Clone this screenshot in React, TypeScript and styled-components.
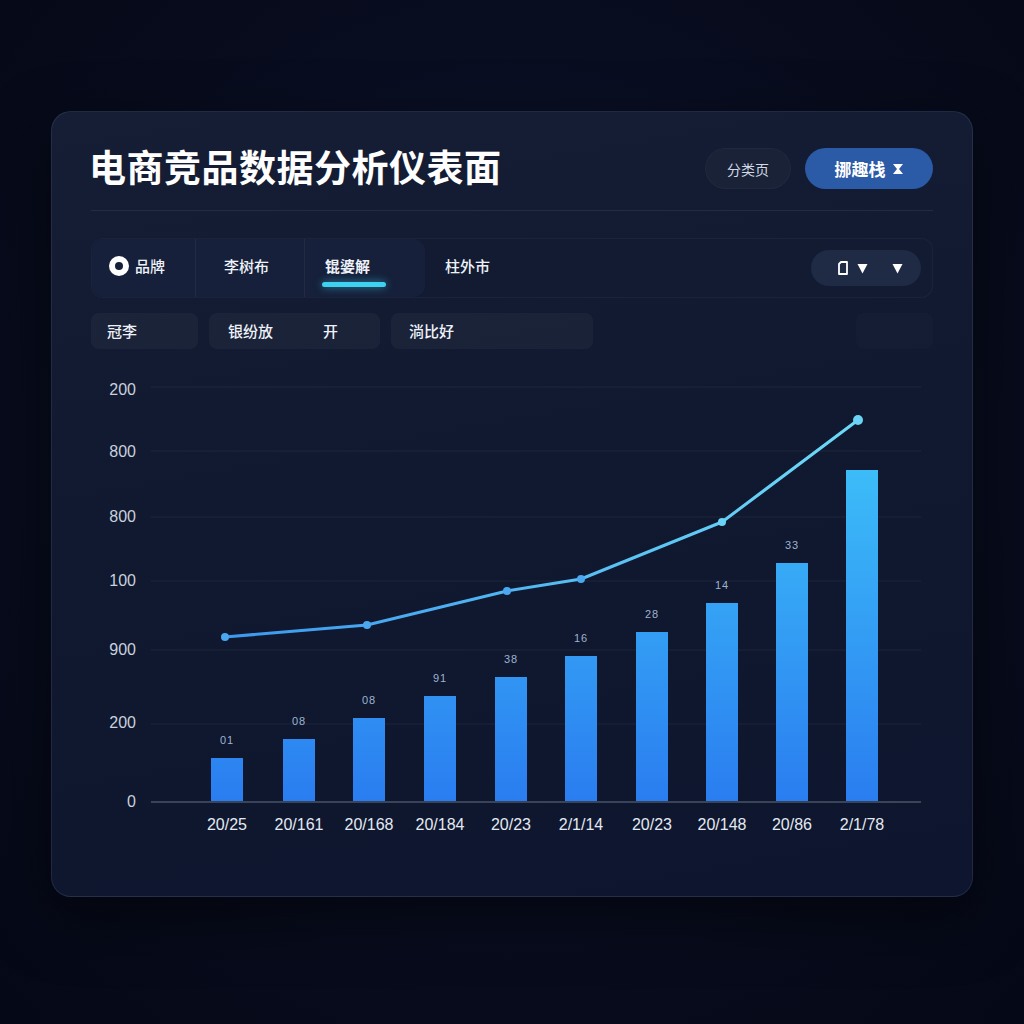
import { FC } from 'react';
import styled, { createGlobalStyle } from 'styled-components';

const GlobalStyle = createGlobalStyle`
  html, body {
    margin: 0;
    padding: 0;
    background: #070b1b;
  }
  body {
    font-family: "Inter", "Noto Sans CJK SC", "Liberation Sans", sans-serif;
    color: #e6ecf5;
  }
`;

const Page = styled.div`
  width: 1024px;
  height: 1024px;
  box-sizing: border-box;
  padding: 111px 51px 0;
  background: radial-gradient(ellipse at 50% 45%, #0c1430 0%, #070b1b 70%, #050816 100%);
`;

const Card = styled.div`
  width: 922px;
  height: 786px;
  box-sizing: border-box;
  padding: 36px 39px 0;
  border-radius: 20px;
  border: 1px solid rgba(140, 160, 200, 0.14);
  background: linear-gradient(170deg, #151e35 0%, #10192f 45%, #0d162e 100%);
  box-shadow: 0 20px 60px rgba(0, 0, 0, 0.5);
  display: flex;
  flex-direction: column;
`;

const Header = styled.div`
  display: flex;
  align-items: center;
  height: 41px;
`;

const Title = styled.h1`
  margin: 0 0 0 -2px;
  font-size: 37px;
  line-height: 41px;
  font-weight: 700;
  color: #ffffff;
  letter-spacing: 0.5px;
  flex: 1;
`;

const HeaderActions = styled.div`
  display: flex;
  align-items: center;
  gap: 14px;
`;

const Pill = styled.button<{ $primary?: boolean }>`
  height: 41px;
  border: none;
  border-radius: 21px;
  display: flex;
  align-items: center;
  justify-content: center;
  gap: 6px;
  font-family: inherit;
  width: ${(p) => (p.$primary ? '128px' : '86px')};
  font-size: ${(p) => (p.$primary ? '17px' : '14px')};
  font-weight: ${(p) => (p.$primary ? 700 : 400)};
  color: ${(p) => (p.$primary ? '#ffffff' : '#d3dae6')};
  background: ${(p) => (p.$primary ? '#2b5aa6' : '#1a2237')};
  box-shadow: ${(p) => (p.$primary ? 'none' : 'inset 0 0 0 1px rgba(255,255,255,0.03)')};
  padding: 0;
`;

const Divider = styled.div`
  height: 1px;
  margin-top: 21px;
  background: rgba(255, 255, 255, 0.07);
`;

const TabBar = styled.div`
  margin-top: 27px;
  height: 60px;
  border-radius: 12px;
  background: #121b32;
  border: 1px solid rgba(255, 255, 255, 0.04);
  box-sizing: border-box;
  display: flex;
  align-items: stretch;
`;

const TabGroup = styled.div`
  display: flex;
  align-items: stretch;
  width: 333px;
  border-radius: 12px;
  background: #16203a;
`;

const Tab = styled.div<{ $w: number; $pl: number; $active?: boolean; $sep?: boolean }>`
  position: relative;
  width: ${(p) => p.$w}px;
  padding-left: ${(p) => p.$pl}px;
  padding-bottom: 5px;
  box-sizing: border-box;
  display: flex;
  align-items: center;
  gap: 6px;
  font-size: 15px;
  color: #eef2f8;
  font-weight: ${(p) => (p.$active ? 700 : 500)};
  border-right: ${(p) => (p.$sep ? '1px solid rgba(255,255,255,0.05)' : 'none')};
  &::after {
    content: '';
    display: ${(p) => (p.$active ? 'block' : 'none')};
    position: absolute;
    left: 17px;
    bottom: 10px;
    width: 64px;
    height: 5px;
    border-radius: 3px;
    background: #3fd2f0;
    box-shadow: 0 0 8px rgba(63, 210, 240, 0.6);
  }
`;

const RadioDot = styled.span`
  width: 20px;
  height: 20px;
  border-radius: 50%;
  background: #ffffff;
  display: flex;
  align-items: center;
  justify-content: center;
  &::before {
    content: '';
    width: 8px;
    height: 8px;
    border-radius: 50%;
    background: #16203a;
  }
`;

const Spacer = styled.div`
  flex: 1;
`;

const ToolPill = styled.div`
  align-self: center;
  margin-right: 11px;
  width: 110px;
  height: 36px;
  border-radius: 18px;
  background: #1f2a45;
  display: flex;
  align-items: center;
  justify-content: center;
  gap: 8px;
  padding-left: 8px;
  box-sizing: border-box;
`;

const FilterRow = styled.div`
  margin-top: 15px;
  display: flex;
  gap: 11px;
  height: 36px;
`;

const FilterBox = styled.div<{ $w: number; $pl?: number; $faint?: boolean }>`
  width: ${(p) => p.$w}px;
  border-radius: 8px;
  background: ${(p) => (p.$faint ? 'rgba(255,255,255,0.015)' : 'rgba(255,255,255,0.04)')};
  display: flex;
  align-items: center;
  padding-left: ${(p) => p.$pl ?? 16}px;
  padding-bottom: 2px;
  box-sizing: border-box;
  font-size: 15px;
  font-weight: 500;
  color: #eef2f8;
`;

const Gap = styled.span<{ $w: number }>`
  display: inline-block;
  width: ${(p) => p.$w}px;
`;

const ChartWrap = styled.div`
  margin-top: 21px;
`;

const yLabels = [
  { t: '200', y: 21 },
  { t: '800', y: 83 },
  { t: '800', y: 148 },
  { t: '100', y: 212 },
  { t: '900', y: 281 },
  { t: '200', y: 354 },
  { t: '0', y: 433 },
];

const grid = [17, 81, 147, 211, 280, 354];

const bars = [
  { x: 136, top: 388, v: '01', d: '20/25' },
  { x: 208, top: 369, v: '08', d: '20/161' },
  { x: 278, top: 348, v: '08', d: '20/168' },
  { x: 349, top: 326, v: '91', d: '20/184' },
  { x: 420, top: 307, v: '38', d: '20/23' },
  { x: 490, top: 286, v: '16', d: '2/1/14' },
  { x: 561, top: 262, v: '28', d: '20/23' },
  { x: 631, top: 233, v: '14', d: '20/148' },
  { x: 701, top: 193, v: '33', d: '20/86' },
  { x: 771, top: 100, v: '', d: '2/1/78' },
];

const linePts: [number, number][] = [
  [134, 267],
  [276, 255],
  [416, 221],
  [490, 209],
  [631, 152],
  [767, 50],
];

const Chart: FC = () => (
  <svg width="844" height="490" viewBox="0 0 844 490">
    <defs>
      <linearGradient id="barGrad" gradientUnits="userSpaceOnUse" x1="0" y1="100" x2="0" y2="432">
        <stop offset="0" stopColor="#3cbcf8" />
        <stop offset="1" stopColor="#2a7df0" />
      </linearGradient>
      <linearGradient id="lineGrad" gradientUnits="userSpaceOnUse" x1="134" y1="0" x2="767" y2="0">
        <stop offset="0" stopColor="#3c98ee" />
        <stop offset="1" stopColor="#6ddaf8" />
      </linearGradient>
    </defs>
    {grid.map((y) => (
      <line key={y} x1="60" x2="830" y1={y} y2={y} stroke="rgba(255,255,255,0.06)" strokeWidth="1" />
    ))}
    {yLabels.map((l, i) => (
      <text
        key={i}
        x="45"
        y={l.y}
        textAnchor="end"
        dominantBaseline="middle"
        fontSize="16"
        fill="#c9d1de"
        fontFamily="Liberation Sans, sans-serif"
      >
        {l.t}
      </text>
    ))}
    {bars.map((b, i) => (
      <g key={i}>
        <rect x={b.x - 16} y={b.top} width="32" height={432 - b.top} fill="url(#barGrad)" />
        {b.v && (
          <text
            x={b.x}
            y={b.top - 17}
            textAnchor="middle"
            dominantBaseline="middle"
            fontSize="11"
            fill="#9fb2cf"
            fontFamily="Liberation Sans, sans-serif"
            letterSpacing="1"
          >
            {b.v}
          </text>
        )}
        <text
          x={b.x}
          y="456"
          textAnchor="middle"
          dominantBaseline="middle"
          fontSize="16"
          fill="#e3e9f2"
          fontFamily="Liberation Sans, sans-serif"
        >
          {b.d}
        </text>
      </g>
    ))}
    <line x1="60" x2="830" y1="432" y2="432" stroke="#3a4459" strokeWidth="2" />
    <polyline
      points={linePts.map((p) => p.join(',')).join(' ')}
      fill="none"
      stroke="url(#lineGrad)"
      strokeWidth="3"
      strokeLinejoin="round"
    />
    {linePts.map((p, i) => (
      <circle
        key={i}
        cx={p[0]}
        cy={p[1]}
        r={i === linePts.length - 1 ? 5 : 4}
        fill={i > 3 ? '#6bd3f6' : '#4aa8f0'}
      />
    ))}
  </svg>
);

const HourglassIcon: FC = () => (
  <svg width="12" height="12" viewBox="0 0 12 12">
    <path d="M1 1 H11 L7 6 L11 11 H1 L5 6 Z" fill="#ffffff" />
  </svg>
);

const DocIcon: FC = () => (
  <svg width="11" height="14" viewBox="0 0 11 14">
    <path d="M3 1 H9 V13 H1 V3 Z" fill="none" stroke="#ffffff" strokeWidth="1.8" strokeLinejoin="round" />
  </svg>
);

const DownIcon: FC = () => (
  <svg width="11" height="11" viewBox="0 0 11 11">
    <path d="M0.5 1 H10.5 L5.5 10.5 Z" fill="#ffffff" />
  </svg>
);

const App: FC = () => {
  return (
    <>
      <GlobalStyle />
      <Page>
        <Card>
          <Header>
            <Title>电商竞品数据分析仪表面</Title>
            <HeaderActions>
              <Pill>分类页</Pill>
              <Pill $primary>
                挪趣栈 <HourglassIcon />
              </Pill>
            </HeaderActions>
          </Header>
          <Divider />

          <TabBar>
            <TabGroup>
              <Tab $w={104} $pl={17} $sep>
                <RadioDot />
                品牌
              </Tab>
              <Tab $w={109} $pl={28} $sep>
                李树布
              </Tab>
              <Tab $w={120} $pl={20} $active>
                锟婆解
              </Tab>
            </TabGroup>
            <Tab $w={120} $pl={20}>
              柱外市
            </Tab>
            <Spacer />
            <ToolPill>
              <DocIcon />
              <DownIcon />
              <Gap $w={8} />
              <DownIcon />
            </ToolPill>
          </TabBar>

          <FilterRow>
            <FilterBox $w={107}>冠李</FilterBox>
            <FilterBox $w={171} $pl={19}>
              银纷放
              <Gap $w={50} />开
            </FilterBox>
            <FilterBox $w={202} $pl={18}>
              淌比好
            </FilterBox>
            <Spacer />
            <FilterBox $w={77} $faint />
          </FilterRow>

          <ChartWrap>
            <Chart />
          </ChartWrap>
        </Card>
      </Page>
    </>
  );
};

export default App;
